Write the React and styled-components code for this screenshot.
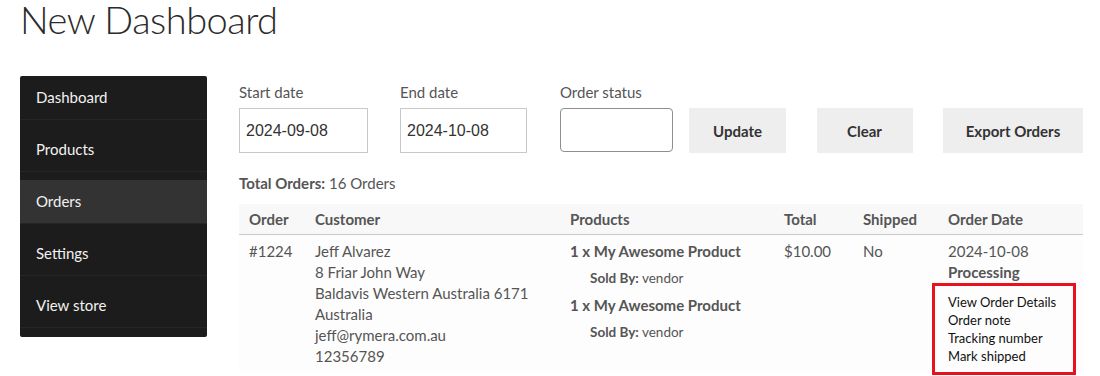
import React from 'react';
import styled, { createGlobalStyle } from 'styled-components';

const GlobalStyle = createGlobalStyle`
  body {
    margin: 0;
    background: #fff;
    font-family: Lato, "Noto Sans", sans-serif;
    color: #555;
  }
`;

const menu = ['Dashboard', 'Products', 'Orders', 'Settings', 'View store'];

const customer = [
  'Jeff Alvarez',
  '8 Friar John Way',
  'Baldavis Western Australia 6171',
  'Australia',
  'jeff@rymera.com.au',
  '12356789',
];

const products = [
  { name: '1 x My Awesome Product', vendor: 'vendor' },
  { name: '1 x My Awesome Product', vendor: 'vendor' },
];

const actions = ['View Order Details', 'Order note', 'Tracking number', 'Mark shipped'];

const columns = [
  { label: 'Order', width: 66 },
  { label: 'Customer', width: 255 },
  { label: 'Products', width: 214 },
  { label: 'Total', width: 79 },
  { label: 'Shipped', width: 85 },
  { label: 'Order Date', width: 145 },
];

const App = () => {
  return (
    <Page>
      <GlobalStyle />
      <Title>New Dashboard</Title>
      <Layout>
        <Sidebar>
          {menu.map(item => (
            <MenuItem key={item} active={item === 'Orders'}>{item}</MenuItem>
          ))}
        </Sidebar>
        <Main>
          <Filters>
            <Field>
              <Label>Start date</Label>
              <DateInput width={129} defaultValue="2024-09-08" />
            </Field>
            <Field>
              <Label>End date</Label>
              <DateInput width={127} defaultValue="2024-10-08" />
            </Field>
            <Field>
              <Label>Order status</Label>
              <StatusBox />
            </Field>
            <Buttons>
              <Button width={97}>Update</Button>
              <Button width={96}>Clear</Button>
              <Button width={140}>Export Orders</Button>
            </Buttons>
          </Filters>
          <Total><b>Total Orders:</b> 16 Orders</Total>
          <Table>
            <colgroup>
              {columns.map(c => <col key={c.label} style={{ width: c.width }} />)}
            </colgroup>
            <thead>
              <tr>
                {columns.map(c => <Th key={c.label}>{c.label}</Th>)}
              </tr>
            </thead>
            <tbody>
              <tr>
                <Td>#1224</Td>
                <Td>
                  {customer.map(line => <div key={line}>{line}</div>)}
                </Td>
                <Td>
                  {products.map((p, i) => (
                    <Product key={i}>
                      <ProductName>{p.name}</ProductName>
                      <SoldBy><b>Sold By:</b> {p.vendor}</SoldBy>
                    </Product>
                  ))}
                </Td>
                <Td>$10.00</Td>
                <Td>No</Td>
                <Td>
                  <div>2024-10-08</div>
                  <Status>Processing</Status>
                  <Actions>
                    {actions.map(a => <ActionLink key={a}>{a}</ActionLink>)}
                  </Actions>
                </Td>
              </tr>
            </tbody>
          </Table>
        </Main>
      </Layout>
    </Page>
  );
};

export default App;

const Page = styled.div`
  width: 1100px;
  height: 376px;
  overflow: hidden;
`;

const Title = styled.h1`
  margin: 0;
  padding: 0 0 0 20px;
  font-family: Lato, sans-serif;
  font-weight: 300;
  font-size: 38px;
  line-height: 38px;
  color: #2b2b2b;
  letter-spacing: -0.5px;
`;

const Layout = styled.div`
  display: flex;
  align-items: flex-start;
  gap: 32px;
  padding: 38px 17px 0 20px;
`;

const Sidebar = styled.nav`
  width: 187px;
  background: #1c1c1c;
  border-radius: 2px;
  padding-bottom: 1px;
  flex-shrink: 0;
`;

const MenuItem = styled.div`
  height: 43px;
  line-height: 43px;
  padding: 0 16px;
  margin-bottom: 8px;
  border-bottom: 1px solid #262626;
  color: #f2f2f2;
  font-size: 15px;
  background: ${p => (p.active ? '#333333' : 'transparent')};
`;

const Main = styled.div`
  flex: 1;
  display: flex;
  flex-direction: column;
`;

const Filters = styled.div`
  display: flex;
  align-items: flex-end;
  gap: 33px;
`;

const Field = styled.div`
  display: flex;
  flex-direction: column;

  &:first-child {
    margin-right: -1px;
  }
`;

const Label = styled.label`
  font-size: 15px;
  line-height: 20px;
  color: #555;
  margin: 6px 0 6px;
`;

const DateInput = styled.input`
  box-sizing: border-box;
  width: ${p => p.width}px;
  height: 45px;
  padding: 0 6px;
  border: 1px solid #c8c8c8;
  border-radius: 0;
  font-family: "Liberation Sans", Arial, sans-serif;
  font-size: 16px;
  color: #333;
  outline: none;
`;

const StatusBox = styled.div`
  box-sizing: border-box;
  width: 113px;
  height: 44px;
  border: 1px solid #8e8e8e;
  border-radius: 4px;
  margin-bottom: 1px;
`;

const Buttons = styled.div`
  display: flex;
  justify-content: space-between;
  width: 394px;
  margin-left: -17px;
`;

const Button = styled.button`
  box-sizing: border-box;
  width: ${p => p.width}px;
  height: 45px;
  border: none;
  background: #eeeeee;
  color: #333;
  font-family: Lato, sans-serif;
  font-weight: 700;
  font-size: 15px;
  padding: 0;
`;

const Total = styled.div`
  font-size: 15px;
  line-height: 20px;
  margin: 20px 0 11px;
  color: #555;
`;

const Table = styled.table`
  width: 844px;
  table-layout: fixed;
  border-collapse: collapse;
  font-size: 15px;
  color: #555;
`;

const Th = styled.th`
  text-align: left;
  font-weight: 700;
  background: #f8f8f8;
  padding: 5px 10px 5px;
  line-height: 20px;
  border-bottom: 1px solid #c9c9c9;
  white-space: nowrap;
`;

const Td = styled.td`
  vertical-align: top;
  background: #fdfdfd;
  padding: 6px 10px 5px;
  line-height: 21px;
`;

const Product = styled.div`
  margin-bottom: 6px;
`;

const ProductName = styled.div`
  font-weight: 700;
`;

const SoldBy = styled.div`
  font-size: 13.5px;
  padding-left: 20px;
  margin-top: 6px;
`;

const Status = styled.div`
  font-weight: 700;
`;

const Actions = styled.div`
  position: relative;
  margin-top: 10px;
  display: flex;
  flex-direction: column;

  &::before {
    content: '';
    position: absolute;
    left: -16px;
    right: -3px;
    top: -10px;
    bottom: -10px;
    border: 3px solid #e8121f;
    pointer-events: none;
  }
`;

const ActionLink = styled.a`
  font-size: 13px;
  line-height: 18px;
  color: #111;
  text-decoration: none;
`;
